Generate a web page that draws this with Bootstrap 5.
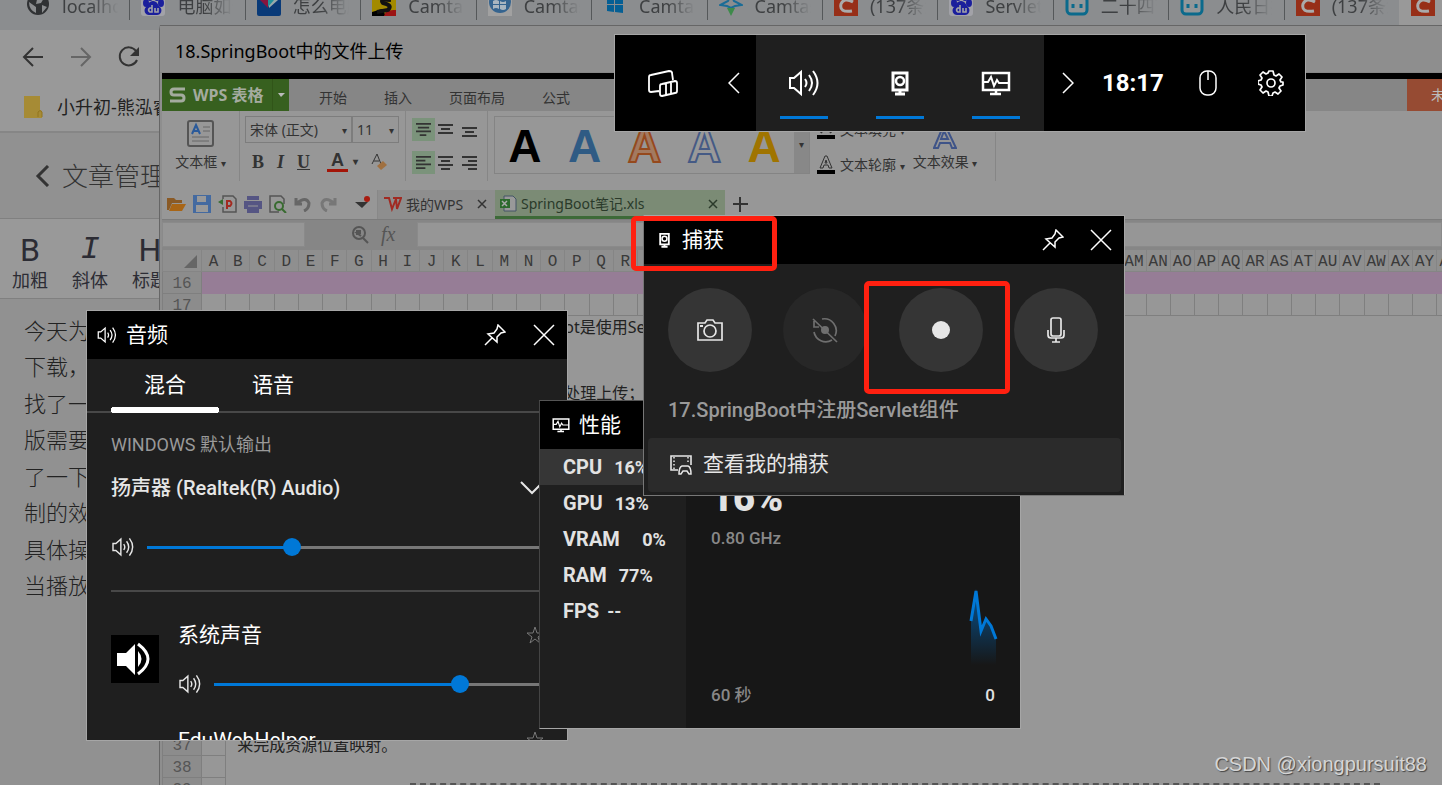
<!DOCTYPE html>
<html lang="zh-CN">
<head>
<meta charset="utf-8">
<meta name="viewport" content="width=device-width, initial-scale=1">
<title>Xbox Game Bar</title>
<link href="https://cdn.jsdelivr.net/npm/bootstrap@5.3.0/dist/css/bootstrap.min.css" rel="stylesheet">
<style>
:root{--ui:"Roboto","Noto Sans CJK SC",sans-serif;--doc:"Noto Sans","Noto Sans CJK SC",sans-serif;--accent:#0078d7}
html,body{height:100%}
body{font-family:var(--doc);background:#999;overflow:hidden}
button{font-family:inherit;background:none;border:0;padding:0;color:inherit}
svg{flex:none;display:block}
.ln{fill:none;stroke:currentColor}
.ln:not([stroke-width]){stroke-width:2}
.desk{min-height:100vh;height:100vh}
/* browser tabs */
.tabs{height:25px;padding-left:14px;background:#8b8d8f}
.tb{flex:1 1 0;min-width:0;padding-left:12px;color:#3e4042;text-decoration:none;font-size:18px}
.tb>span{display:flex;margin-top:-8px;height:28px;line-height:28px;gap:12px}
.tb b{font-weight:400;width:56px;overflow:hidden;white-space:nowrap;-webkit-mask-image:linear-gradient(90deg,#000 50%,transparent)}
.tb+.tb::before{content:"";position:absolute;left:0;top:0;height:20px;border-left:1px solid #55585a}
.tb.on{flex:0 0 43px;background:#999}
.tb.on::before{display:none}
/* left browser page */
.page{width:160px;background:#919191;border-top:5px solid #8b8d8f;border-right:1px solid #666;overflow:hidden;white-space:nowrap;color:#333}
.nav1{height:103px;background:#999;border-bottom:2px solid #868686;padding:14px 0 0 22px}
.nav1 .arrows{gap:26px;height:26px}
.fav{margin-top:23px;gap:14px;font-size:18px;line-height:28px;color:#222}
.crumb{height:86px;border-bottom:1px solid #808080;padding:2px 0 0 34px;font-size:26px;gap:11px;color:#333}
.tools{height:80px;background:#999;border-bottom:1px solid #808080;padding:9px 0 0 12px;gap:24px;color:#2c2c34}
.tools button{width:36px;font-size:18px;line-height:26px}
.tools b,.tools i{display:block;font:400 32px/34px "Roboto",sans-serif}
.tools i{font-family:"Liberation Mono",monospace;font-style:italic}
.art{height:292px;margin:13px 0 0 24px;font-size:22px;line-height:36px;color:#222}
.thin{font-weight:300}
.art p{flex:1 1 0;margin:0}
/* video window */
.win{background:#8e8e8e;border-top:1px solid #666;min-width:0;overflow:hidden}
.ttl{height:47px;border-bottom:1px solid #868686;padding-left:15px;font-size:18px;line-height:51px;color:#000}
.inner{border-top:6px solid #000;margin-left:2px;background:#979797;color:#333;white-space:nowrap}
.mbar{height:32px;background:#868686;font-size:14px}
.wps{width:127px;background:#37601f;color:#a4ab9f;font-size:16px;font-weight:700;padding-left:7px;gap:7px}
.wps em{width:17px;border-left:1px solid #315519;align-self:stretch}
.mlist{padding-left:30px;gap:37px;padding-top:6px}
.login{width:35px;background:#964b33;color:#bbb;padding-left:24px;overflow:hidden}
.rib{height:79px;font-size:14px}
.rib small{font-size:10px}
.rg{border-right:1px solid #868686;height:70px;padding-top:5px}
.bx{border:1px solid #7d7d7d;height:27px;line-height:26px}
.gal{width:316px;height:58px;border:1px solid #848484;font:700 46px/58px "Liberation Sans",sans-serif}
.gal span{flex:1 1 0;text-align:center}
.gal em{width:15px;background:#888;font:400 10px/56px "Liberation Sans",sans-serif;text-align:center}
.gr{background:#7b937b;width:23px;height:23px;margin-left:-4px;padding:3px 4px}
.alg{width:66px;row-gap:10px;column-gap:8px;grid-template-columns:14px 16px 16px}
.dt{height:29px;font-size:14px}
.ic7{padding:0 8px 0 5px;gap:7px;width:185px}
.t1{background:#8e8e8e;width:118px;padding:0 8px 0 6px;border-left:1px solid #888}
.t2{background:#7b8b75;width:230px;border-bottom:3px solid #3d6a38;padding:2px 7px 0 5px;color:#2a3a2a}
.fb{height:31px;background:#868686;border-top:1px solid #7c7c7c}
.fb input{background:#969696;border:1px solid #8a8a8a;height:25px;border-radius:0;padding:0}
.sheet{width:calc(100% + 20px);table-layout:fixed;border-collapse:collapse;font-size:16px;line-height:18px}
.sheet th,.sheet td{height:22px;padding:0;border:1px solid #7f7f7f;font-weight:400;overflow:hidden}
.sheet thead th{font-family:"Liberation Mono",monospace;background:#8f8f8f;text-align:center;border-color:#858585;border-top:0;color:#3a3a3a;padding-top:3px}
.sheet tbody th{background:#8c8c8c;text-align:center;color:#555;font-family:"Liberation Mono",monospace;padding-top:3px}
.sheet .rn{width:39px}
.sheet .pk{background:#967d96;border-color:#967d96}
.sheet .big{vertical-align:top;font-size:16px;line-height:22px;border:0;border-top:1px solid #7f7f7f;color:#222}
.big p{margin:0;height:22px}
.big .c1{padding-left:338px}
.big .c2{padding-left:11px}
.big .cut{margin:27px 0 0 184px;width:970px;border-top:2px dashed #555;height:3px}
/* game bar */
.gb{position:absolute;font-family:var(--ui);color:#fff;background:#1f1f1f;border:1px solid #a6a6a6;white-space:nowrap;overflow:hidden}
.bar{left:614px;top:34px;width:692px;height:98px}
.bar .blk{background:#000}
.bar .mid{width:288px}
.wb{position:relative;width:96px;height:96px}
.wb svg{margin:0 auto}
.wb::after{content:"";position:absolute;left:24px;right:24px;top:81px;height:3px;background:var(--accent)}
.clock{font:700 24px/32px "Roboto",sans-serif}
.hd{height:48px;background:#000;font-size:21px;gap:9px;padding:0 12px 0 10px;color:#fff}
.hd>span{padding-top:2px}
.hd .pin{margin-left:auto;margin-right:18px}
.aud{left:86px;top:310px;width:482px;height:431px}
.atabs{height:54px;border-bottom:2px solid #484848;padding-left:24px;font-size:21px}
.atabs button{width:108px;height:54px;padding-bottom:1px}
.atabs .on{background:radial-gradient(circle at 3px 3px,#fff 3px,transparent 3px) 0 100%/6px 6px no-repeat,radial-gradient(circle at 3px 3px,#fff 3px,transparent 3px) 100% 100%/6px 6px no-repeat,linear-gradient(#fff,#fff) 50% 100%/102px 6px no-repeat}
.abody{padding:0 23px 0 24px;color:#e6e6e6}
.cap{font-size:18px;line-height:24px;color:#999;margin-top:20px}
.dev{font-size:20px;font-weight:500;height:30px;margin-top:16px;width:100%}
.rowv{height:24px;gap:12px}
input[type=range].vol{appearance:none;-webkit-appearance:none;flex:1 1 0;min-width:0;height:18px;background:none;margin:0}
.vol::-webkit-slider-runnable-track{height:3px;background:linear-gradient(90deg,var(--accent) var(--v),#777 var(--v))}
.vol::-webkit-slider-thumb{-webkit-appearance:none;width:18px;height:18px;border-radius:50%;background:var(--accent);margin-top:-8px}
.sepr{border-top:2px solid #484848;margin:31px 0 29px}
.app{gap:19px}
.app .nm{font-size:21px;line-height:28px;color:#fff}
.perf{left:539px;top:400px;width:482px;height:329px;border-color:#555 #a6a6a6 #a6a6a6 #444;z-index:2}
.mt{width:146px;font-size:20px;color:#e2e2e2}
.mt button{height:36px;padding-left:23px;gap:12px;font-weight:700;width:100%}
.mt .on{background:#363636}
.mt b{min-width:34px;text-align:right;font-weight:700;font-size:18px}
.cpu{background:#171717;flex:1 1 0;padding:21px 25px 0 25px;color:#888;font-size:17px;font-weight:500}
.cpu strong{display:block;font-size:38px;line-height:56px;font-weight:900;color:#e2e2e2}
.capt{left:643px;top:215px;width:482px;height:281px;z-index:3;border-color:#a6a6a6 #a6a6a6 #777 #777}
.circ{padding:24px 26px 0 24px}
.circ button{width:84px;height:84px;border-radius:50%;background:#353535;color:#e6e6e6}
.circ button:disabled{background:#272727;color:#6f6f6f}
.circ svg{margin:auto}
.last{font-size:20px;font-weight:500;line-height:30px;padding-left:24px;margin:23px 0 13px;color:#9a9a9a}
.view{background:#2b2b2b;margin:0 3px 0 4px;height:54px;border-radius:4px;width:473px;padding-left:22px;gap:11px;font-size:21px;color:#e6e6e6}
.red{position:absolute;z-index:4;border:5px solid #ff2010;border-radius:5px;width:146px}
.r1{left:631px;top:216px;height:55px}
.r2{left:864px;top:281px;height:113px}
.wm{position:absolute;right:15px;bottom:7px;font:400 20px/28px "Liberation Sans",sans-serif;color:#d5d5d5;text-shadow:1px 1px 1px #444}
</style>
</head>
<body>
<svg width="0" height="0" class="position-absolute" aria-hidden="true">
<defs>
<symbol id="spk" viewBox="0 0 32 28"><path class="ln" d="M2 9h4l7-6v22l-7-6H2z"/><path class="ln" d="M17 10q3 4 0 8M21 6q6 8 0 16M25 2q9 12 0 24"/></symbol>
<symbol id="cam" viewBox="0 0 20 26"><path class="ln" stroke-width="3" d="M3 3h14v17H3zM10 20v4M5 24h10"/><circle class="ln" cx="10" cy="11" r="4" stroke-width="2.5"/></symbol>
<symbol id="mon" viewBox="0 0 30 26"><path class="ln" stroke-width="2.5" d="M2 3h26v17H2zM15 20v4M9 24h11"/><path class="ln" d="M2 12h5l3-5 3 9 3-6 2 3h10"/></symbol>
<symbol id="pin" viewBox="0 0 22 22"><path class="ln" stroke-width="1.5" d="M14 1l7 7-4 1-4 4 0 5-9-8 6-1 3-4zM8 14l-7 7"/></symbol>
<symbol id="x" viewBox="0 0 22 22"><path class="ln" stroke-width="1.5" d="M1 1l20 20M21 1L1 21"/></symbol>
<symbol id="star" viewBox="0 0 18 18"><path fill="none" stroke="currentColor" d="M9 1l2 6h6l-5 4 2 6-5-4-5 4 2-6-5-4h6z"/></symbol>
<symbol id="du" viewBox="0 0 24 24"><rect width="24" height="24" rx="3" fill="#a2a2a8"/><g fill="#1b1f9c"><ellipse cx="5" cy="11" rx="3" ry="4"/><ellipse cx="9" cy="5" rx="3" ry="4"/><ellipse cx="16" cy="5" rx="3" ry="4"/><ellipse cx="20" cy="11" rx="3" ry="4"/><path d="M12 9c4 0 5 4 7 6 3 3 1 8-3 8H8c-4 0-6-5-3-8 2-2 3-6 7-6z"/></g><path stroke="#a2a2a8" stroke-width="1.6" fill="none" d="M11 13v7H9q-3-2 0-4h2M14 16v4h3v-4"/></symbol>
<symbol id="cs" viewBox="0 0 24 24"><path fill="#972f18" d="M0 0h24v24H0z"/><path d="M19 10q-9-5-12 2-2 9 11 7" fill="none" stroke="#aaa" stroke-width="3"/></symbol>
<symbol id="bili" viewBox="0 0 24 24"><rect x="2" y="5" width="20" height="17" rx="4" fill="#939799" stroke="#0b6a8c" stroke-width="3"/><path stroke="#0b6a8c" stroke-width="3" d="M8 12v4M16 12v4"/></symbol>
</defs></svg>

<div class="desk position-relative overflow-hidden d-flex flex-column">
<nav class="tabs d-flex" aria-label="标签页">
<a href="#" class="tb position-relative"><span><svg width="24" height="24" viewBox="0 0 24 24"><circle cx="12" cy="12" r="11" fill="#303234"/><path fill="#8b8d8f" d="M3 10l7 5v6q-7-3-7-11zM12 3l6 3-3 5-5 1zM16 13l5 2-5 6z"/></svg><b>localhost</b></span></a>
<a href="#" class="tb position-relative"><span><svg width="24" height="24"><use href="#du"/></svg><b>电脑如何</b></span></a>
<a href="#" class="tb position-relative"><span><svg width="24" height="24" viewBox="0 0 24 24"><rect width="24" height="24" rx="2" fill="#093a78"/><path fill="#86143e" d="M3 8h9l-1 8z"/><path fill="#9aa" d="M12 8h9l-9 8z"/><path fill="#23919b" d="M11 8h6l-6 7z"/></svg><b>怎么电脑</b></span></a>
<a href="#" class="tb position-relative"><span><svg width="24" height="24" viewBox="0 0 24 24"><path fill="#a38a00" d="M0 0h24v24H0z"/><path d="M0 24v-4l10-3 4 7z"/><path d="M12 24q1-7 12-6v6z" fill="#9c1414"/><path d="M19 8q-12-1-8 3 10 2 5 7l-11 2" fill="none" stroke="#111" stroke-width="4"/></svg><b>Camtasia</b></span></a>
<a href="#" class="tb position-relative"><span><svg width="24" height="24" viewBox="0 0 24 24"><path fill="#a1a1a1" d="M0 0h24v24H0z"/><circle cx="12" cy="10" r="11" fill="#35648f"/><path fill="#a9b6c0" d="M5 9q3-2 6 0v3H5zM12 9q3 2 6 0v3h-6zM5 13h6v4q-3-2-6 0zM12 13h6v4q-3 2-6 0z"/></svg><b>Camtasia</b></span></a>
<a href="#" class="tb position-relative"><span><svg width="24" height="24" viewBox="0 0 24 24"><path fill="#055f94" d="M4 6l7-1v7H4zM12 5l8-1v8h-8zM4 13h7v7l-7-1zM12 13h8v8l-8-1z"/></svg><b>Camtasia</b></span></a>
<a href="#" class="tb position-relative"><span><svg width="24" height="24" viewBox="0 0 24 24"><path fill="none" stroke="#1a6c96" stroke-width="2" d="M12 2l3 7 8 4-7 1-4 2-4-2-7-1 8-4z"/><path fill="#3d8a4a" d="M8 16h8l-4 8z"/></svg><b>Camtasia</b></span></a>
<a href="#" class="tb position-relative"><span><svg width="24" height="24"><use href="#cs"/></svg><b>(137条消息</b></span></a>
<a href="#" class="tb position-relative"><span><svg width="24" height="24"><use href="#du"/></svg><b>Servlet_</b></span></a>
<a href="#" class="tb position-relative"><span><svg width="24" height="24"><use href="#bili"/></svg><b>二十四节</b></span></a>
<a href="#" class="tb position-relative"><span><svg width="24" height="24"><use href="#bili"/></svg><b>人民日报</b></span></a>
<a href="#" class="tb position-relative"><span><svg width="24" height="24"><use href="#cs"/></svg><b>(137条消息</b></span></a>
<a href="#" class="tb on position-relative" aria-label="CSDN"><span><svg width="24" height="24"><use href="#cs"/></svg></span></a>
</nav>
<div class="d-flex flex-grow-1 overflow-hidden">
<aside class="page flex-shrink-0">
<div class="nav1">
<div class="arrows d-flex align-items-center">
<button aria-label="后退"><svg width="22" height="22" viewBox="0 0 22 22"><path class="ln" d="M21 11H3M11 2l-9 9 9 9"/></svg></button>
<button aria-label="前进"><svg width="22" height="22" viewBox="0 0 22 22" color="#666"><path class="ln" d="M1 11h18M11 2l9 9-9 9"/></svg></button>
<button aria-label="刷新"><svg width="22" height="22" viewBox="0 0 22 22"><path class="ln" d="M18 5a9 9 0 1 0 1 9"/><path fill="#333" d="M21 1v9h-9z"/></svg></button>
</div>
<a href="#" class="fav d-flex align-items-center text-decoration-none"><svg width="21" height="22" viewBox="0 0 21 22"><path fill="#a68b35" d="M2 0h16v14l2 1v7H2z"/><path fill="none" stroke="#92751e" d="M16 21v-5q2-3 4 0v5"/></svg>小升初-熊泓睿</a>
</div>
<div class="crumb thin d-flex align-items-center"><svg width="17" height="22" viewBox="0 0 17 22"><path class="ln" stroke-width="3" d="M14 1L4 11l10 10"/></svg>文章管理</div>
<div class="tools d-flex"><button><b>B</b>加粗</button><button><i>I</i>斜体</button><button><b>H</b>标题</button></div>
<div class="art thin d-flex flex-column"><p>今天为了</p><p>下载，</p><p>找了一个</p><p>版需要</p><p>了一下</p><p>制的效果</p><p>具体操作</p><p>当播放</p></div>
</aside>

<main class="win flex-grow-1">
<div class="ttl">18.SpringBoot中的文件上传</div>
<div class="inner">
<div class="mbar d-flex">
<button class="wps d-flex align-items-center"><svg width="17" height="16" viewBox="0 0 17 16"><path d="M16 2H5Q2 2 2 5t3 3h7q3 0 3 3t-3 3H1" fill="none" stroke="#a4ab9f" stroke-width="3"/></svg>WPS 表格<em class="d-flex align-items-center ms-auto"><svg class="mx-auto" width="7" height="4"><path fill="#bbb" d="M0 0h7L3 4z"/></svg></em></button>
<div class="mlist d-flex align-items-center"><span>开始</span><span>插入</span><span>页面布局</span><span>公式</span></div>
<div class="login ms-auto d-flex align-items-center">未登录</div>
</div>
<div class="rib d-flex">
<div class="rg text-center" style="width:78px"><svg class="mx-auto mt-1 mb-1" width="27" height="27" viewBox="0 0 27 27"><rect x="1" y="1" width="25" height="25" rx="2" fill="none" stroke="#555" stroke-width="2"/><path fill="none" stroke="#666" d="M16 7h7M16 11h7M5 17h17M5 21h17"/><path fill="none" stroke="#2a5a9a" stroke-width="2" d="M5 14l4-9 4 9M7 11h5"/></svg>文本框 <small>▾</small></div>
<div class="rg" style="width:166px;padding-left:5px">
<div class="d-flex"><div class="bx ps-1" style="width:107px">宋体 (正文)<small class="float-end pe-1">▾</small></div><div class="bx ps-1" style="width:47px">11<small class="float-end pe-1">▾</small></div></div>
<div class="d-flex align-items-center pt-2" style="gap:13px;padding-left:7px;font:700 18px/22px 'Liberation Serif',serif"><span>B</span><i>I</i><u>U</u><span style="border-bottom:3px solid #a31508;line-height:18px;font-family:'Liberation Sans'" class="px-1 ms-1">A</span><small style="margin-left:-8px">▾</small><svg width="17" height="18" viewBox="0 0 17 18"><path class="ln" stroke-width="1" d="M1 11l5-10 4 10M3 8h5"/><path fill="#a07040" d="M6 13l6-5 4 4-6 5z"/></svg></div>
</div>
<div class="rg" style="width:82px;padding:7px 0 0 10px"><div class="alg d-grid">
<svg class="gr" viewBox="0 0 16 16"><path class="ln" d="M0 2h16M2 6h12M0 10h16M4 14h7"/></svg><svg width="16" height="18"><path class="ln" d="M0 7h15M3 11h9M0 15h15"/></svg><svg width="16" height="20"><path class="ln" d="M0 10h15M3 14h9M0 18h15"/></svg>
<svg class="gr" viewBox="0 0 16 16"><path class="ln" d="M0 2h16M0 6h10M0 10h16M0 14h10"/></svg><svg width="16" height="20"><path class="ln" d="M0 6h15M3 10h9M0 14h15M3 18h9"/></svg><svg width="16" height="20"><path class="ln" d="M0 6h15M6 10h9M0 14h15M6 18h9"/></svg></div></div>
<div class="rg d-flex" style="width:508px;padding-left:6px">
<div class="gal d-flex"><span style="color:#000">A</span><span style="color:#2f5b84">A</span><span style="color:#a37a60;-webkit-text-stroke:2px #95491d">A</span><span style="color:#999;-webkit-text-stroke:2px #455a85">A</span><span style="color:#a07400">A</span><em>▾</em></div>
<div class="d-flex flex-column" style="padding:4px 0 0 7px;gap:14px;line-height:19px"><div class="d-flex" style="gap:5px"><svg width="18" height="20"><path class="ln" d="M4 13l5-11 5 11"/><path fill="#000" d="M0 15h18v4H0z"/></svg><span>文本填充 <small>▾</small></span></div><div class="d-flex" style="gap:5px"><svg width="18" height="20"><path class="ln" stroke-width="1" d="M3 13L8 1h2l5 12h-3l-1-3H7l-1 3zM8 8l1-3 1 3z"/><path fill="#000" d="M0 15h18v4H0z"/></svg><span>文本轮廓 <small>▾</small></span></div></div>
<div class="text-center" style="padding:9px 0 0 8px;line-height:19px"><svg class="mx-auto" width="24" height="27" viewBox="0 0 24 27"><path fill="none" stroke="#3f5488" stroke-width="2" d="M1 23L9 4h5l9 19h-4l-2-5H7l-2 5zM8 14l3-8 4 8z"/></svg>文本效果 <small>▾</small></div>
</div>
</div>
<div class="dt d-flex align-items-stretch">
<div class="ic7 d-flex align-items-center flex-shrink-0">
<svg width="19" height="16" viewBox="0 0 19 16"><path fill="#8a5a26" d="M0 2h7l2 2h6v3H5l-3 7H0z"/><path fill="#a86516" d="M5 8h14l-4 7H2z"/></svg>
<svg width="18" height="18" viewBox="0 0 18 18"><path fill="#446aa0" d="M0 0h18v18H0z"/><path fill="#999" d="M4 1h9v6H4zM3 10h12v7H3z"/></svg>
<svg width="19" height="18" viewBox="0 0 19 18"><path fill="none" stroke="#555" stroke-width="1.5" d="M5 4V1h10l3 3v13H5v-5"/><path fill="#386b30" d="M0 7l5-3v6z"/><path fill="none" stroke="#a32a20" stroke-width="2" d="M9 14V6h3q3 2 0 5H9"/></svg>
<svg width="18" height="17" viewBox="0 0 18 17"><path fill="#555583" d="M3 0h12v4H3zM0 5h18v8H0zM3 12h12v5H3z"/><path stroke="#999" d="M4 10h10"/></svg>
<svg width="18" height="18" viewBox="0 0 18 18"><path fill="none" stroke="#555" stroke-width="1.5" d="M15 9V4l-3-3H1v16h9"/><circle cx="10" cy="11" r="4" fill="none" stroke="#386b30" stroke-width="2"/><path stroke="#386b30" stroke-width="2" d="M13 14l4 4"/></svg>
<svg width="18" height="16" viewBox="0 0 18 16"><path fill="none" stroke="#666" stroke-width="3" d="M3 7q9-7 12 0 0 6-5 8M2 2v6h6"/></svg>
<svg width="18" height="16" viewBox="0 0 18 16"><path fill="none" stroke="#777" stroke-width="3" d="M15 7Q6 0 3 7q0 6 5 8M16 2v6h-6"/></svg>
</div>
<div class="d-flex align-items-center flex-shrink-0" style="width:30px;padding-left:8px"><svg width="16" height="16" viewBox="0 0 16 16"><path fill="#333" d="M0 6h13l-6 6z"/><circle cx="12" cy="3" r="3" fill="#a81c10"/></svg></div>
<div class="t1 d-flex align-items-center gap-1"><svg width="18" height="15" viewBox="0 0 18 15"><path fill="none" stroke="#a12a22" stroke-width="2" d="M0 1h5l3 11 4-10 1 10L17 1H9"/></svg>我的WPS<svg class="ms-auto" width="10" height="10"><path class="ln" stroke-width="1.5" d="M1 1l8 8M9 1L1 9"/></svg></div>
<div class="t2 d-flex align-items-center gap-1"><svg width="17" height="17" viewBox="0 0 17 17"><path fill="#999" stroke="#456" d="M4 1h9l3 3v12H4z"/><path fill="#2c6a2c" d="M0 4h10v9H0z"/><path stroke="#aaa" stroke-width="1.5" d="M2 6l5 5M7 6l-5 5"/></svg>SpringBoot笔记.xls<svg class="ms-auto" width="10" height="10"><path class="ln" stroke-width="1.5" d="M1 1l8 8M9 1L1 9"/></svg></div>
<div class="d-flex align-items-center ps-2"><svg width="15" height="15"><path class="ln" d="M7 0v15M0 7h15"/></svg></div>
</div>
<div class="fb d-flex align-items-center">
<input aria-label="名称框" style="width:143px"><svg style="margin-left:47px" width="17" height="18" viewBox="0 0 17 18" color="#555"><circle class="ln" cx="7" cy="7" r="6"/><path class="ln" d="M11 12l5 5M5 9V5h3v2H5l4 3" /></svg><i style="font:italic 20px 'Liberation Serif';margin:0 22px 0 12px;color:#555">fx</i><input class="flex-grow-1" aria-label="编辑栏">
</div>
<table class="sheet" id="sheet"><thead><tr><th class="rn"><svg class="ms-auto me-1" width="13" height="13"><path fill="#666" d="M13 0v13H0z"/></svg></th></tr></thead><tbody></tbody></table>
</div>
</main>
</div>

<section class="gb bar d-flex" aria-label="游戏栏">
<div class="blk d-flex align-items-center" style="width:141px;padding-left:32px"><button aria-label="小组件"><svg width="32" height="28" viewBox="0 0 32 28"><path class="ln" stroke-width="1.8" stroke-linejoin="round" d="M12 22l-8 1q-2 0-2-2V8q0-2 2-2l18-4q3 0 3 2l1 7M15 15l13-3q2 0 2 2v8q0 2-2 2l-13 3q-2 0-2-2v-8q0-2 2-2zM19 14v12M24 13v12"/></svg></button><button class="ms-auto me-3" aria-label="向左"><svg width="12" height="22" viewBox="0 0 12 22"><path class="ln" stroke-width="1.5" d="M11 1L1 11l10 10"/></svg></button></div>
<div class="mid d-flex"><button class="wb" aria-label="音频"><svg width="32" height="28"><use href="#spk"/></svg></button><button class="wb" aria-label="捕获"><svg width="20" height="26"><use href="#cam"/></svg></button><button class="wb" aria-label="性能"><svg width="30" height="26"><use href="#mon"/></svg></button></div>
<div class="blk d-flex align-items-center flex-grow-1" style="padding:0 21px 0 18px"><button aria-label="向右"><svg width="12" height="22" viewBox="0 0 12 22"><path class="ln" stroke-width="1.5" d="M1 1l10 10L1 21"/></svg></button><span class="clock" style="margin-left:28px">18:17</span><button class="ms-auto" aria-label="鼠标"><svg width="18" height="26" viewBox="0 0 18 26"><rect class="ln" stroke-width="1.5" x="1" y="1" width="16" height="24" rx="7"/><path class="ln" stroke-width="1.5" d="M9 1v9"/></svg></button><button style="margin-left:41px" aria-label="设置"><svg width="26" height="26" viewBox="0 0 26 26"><circle class="ln" stroke-width="1.7" cx="13" cy="13" r="4"/><path class="ln" stroke-width="1.7" stroke-linejoin="round" d="M11 1h4l1 4 2 1 3-2 3 3-2 3 1 2 2 0v3l-3 1-1 2 2 3-3 3-3-2-2 1-1 3h-3l-1-4-2-1-3 2-3-3 2-3-1-2-3-1v-3l3-1 1-2-2-3 3-3 3 2 2-1z"/></svg></button></div>
</section>

<section class="gb aud" aria-label="音频">
<div class="hd d-flex align-items-center"><svg width="20" height="18"><use href="#spk"/></svg><span>音频</span><button class="pin" aria-label="固定"><svg width="22" height="22"><use href="#pin"/></svg></button><button aria-label="关闭"><svg width="22" height="22"><use href="#x"/></svg></button></div>
<div class="atabs d-flex"><button class="on">混合</button><button>语音</button></div>
<div class="abody">
<div class="cap">WINDOWS 默认输出</div>
<button class="dev d-flex align-items-center justify-content-between"><span>扬声器 (Realtek(R) Audio)</span><svg width="24" height="14" viewBox="0 0 24 14"><path class="ln" d="M1 1l11 11L23 1"/></svg></button>
<div class="rowv d-flex align-items-center" style="margin-top:32px"><svg width="24" height="20"><use href="#spk"/></svg><input class="vol" type="range" aria-label="主音量" value="36" style="--v:37%"></div>
<div class="sepr"></div>
<div class="app d-flex align-items-center"><svg width="48" height="48" viewBox="0 0 48 48"><path d="M0 0h48v48H0z"/><path fill="#fff" d="M6 18h9l9-9v31l-9-9H6zM27 16q7 8 0 16z"/><path fill="none" stroke="#fff" stroke-width="3" d="M27 9q20 15 0 30"/></svg>
<div class="flex-grow-1"><div class="nm d-flex align-items-center justify-content-between">系统声音<svg width="18" height="18" color="#777"><use href="#star"/></svg></div>
<div class="rowv d-flex align-items-center" style="margin-top:23px"><svg width="24" height="20"><use href="#spk"/></svg><input class="vol" type="range" aria-label="系统声音音量" value="76" style="--v:75%"></div></div></div>
<div class="app d-flex" style="padding:30px 0 0 67px"><div class="nm flex-grow-1 d-flex align-items-center justify-content-between">EduWebHelper<svg width="18" height="18" color="#777"><use href="#star"/></svg></div></div>
</div>
</section>

<section class="gb perf" aria-label="性能">
<div class="hd d-flex align-items-center" style="padding-left:12px"><svg width="18" height="16"><use href="#mon"/></svg><span>性能</span></div>
<div class="d-flex" style="height:279px"><div class="mt">
<button class="on d-flex align-items-center">CPU<b>16%</b></button><button class="d-flex align-items-center">GPU<b>13%</b></button><button class="d-flex align-items-center">VRAM<b>0%</b></button><button class="d-flex align-items-center">RAM<b>77%</b></button><button class="d-flex align-items-center" style="gap:8px">FPS<b class="text-start">--</b></button></div>
<div class="cpu"><strong>16%</strong>0.80 GHz
<svg class="ms-auto" style="margin-top:33px;margin-right:-4px" width="30" height="80" viewBox="0 0 30 80"><defs><linearGradient id="g" x2="0" y2="1"><stop offset="0" stop-color="#0063b1" stop-opacity=".8"/><stop offset="1" stop-color="#0063b1" stop-opacity="0"/></linearGradient></defs><path fill="url(#g)" d="M2 36L7 4l5 44 5-13 5 6 5 12v27H2z"/><path fill="none" stroke="#0078d7" stroke-width="3" d="M2 36L7 6l5 40 5-12 5 7 5 13"/></svg>
<div class="d-flex justify-content-between" style="margin-top:18px"><span>60 秒</span><span style="color:#e2e2e2">0</span></div></div></div>
</section>

<section class="gb capt" aria-label="捕获">
<div class="hd d-flex align-items-center" style="padding-left:14px;gap:11px"><svg width="13" height="16"><use href="#cam"/></svg><span>捕获</span><button class="pin" style="margin-right:15px" aria-label="固定"><svg width="22" height="22"><use href="#pin"/></svg></button><button aria-label="关闭"><svg width="22" height="22"><use href="#x"/></svg></button></div>
<div class="circ d-flex justify-content-between">
<button aria-label="截图"><svg width="26" height="22" viewBox="0 0 26 22"><path class="ln" stroke-width="1.7" d="M1 4h7l2-3h6l2 3h7v17H1z"/><circle class="ln" stroke-width="1.7" cx="13" cy="12" r="6"/><path fill="currentColor" d="M3 6h3v2H3z"/></svg></button>
<button disabled aria-label="录制最近 30 秒"><svg width="26" height="26" viewBox="0 0 26 26"><path class="ln" stroke-width="1.7" d="M10 2a12 12 0 0 1 13 17M20 23A12 12 0 0 1 2 15M1 2l24 23M2 4v6h5"/><circle cx="13" cy="13" r="4" fill="currentColor"/></svg></button>
<button aria-label="开始录制"><svg width="18" height="18"><circle cx="9" cy="9" r="9" fill="currentColor"/></svg></button>
<button aria-label="麦克风"><svg width="18" height="26" viewBox="0 0 18 26"><rect class="ln" stroke-width="1.7" x="4" y="1" width="10" height="18" rx="2"/><path class="ln" stroke-width="1.7" d="M1 13v5q0 3 3 3h10q3 0 3-3v-5M9 21v4M5 25h8"/></svg></button>
</div>
<div class="last">17.SpringBoot中注册Servlet组件</div>
<button class="view d-flex align-items-center"><svg width="22" height="20" viewBox="0 0 22 20"><path class="ln" stroke-width="1.6" d="M8 15H1V1h20v9"/><path stroke="currentColor" stroke-width="1.5" stroke-dasharray="1.5 2" d="M4 2v12M18 2v7"/><path class="ln" stroke-width="1.5" d="M9 19q0-7 3-8h6q3 1 3 8l-2 0-2-3h-4l-2 3z"/></svg>查看我的捕获</button>
</section>
<div class="red r1"></div><div class="red r2"></div>
<div class="wm">CSDN @xiongpursuit88</div>
</div>
<script src="https://cdn.jsdelivr.net/npm/bootstrap@5.3.0/dist/js/bootstrap.bundle.min.js"></script>
<script>
// Build the spreadsheet: columns A..AZ, rows 16..39
const head=document.querySelector('#sheet thead tr'),body=document.querySelector('#sheet tbody');
const N=52;
for(let i=0;i<N;i++)head.insertAdjacentHTML('beforeend',`<th>${i<26?'':'A'}${String.fromCharCode(65+i%26)}</th>`);
for(let r=16;r<40;r++){
  let h=`<th>${r}</th>`;
  if(r===16)h+=`<td class="pk" colspan="${N}"></td>`;
  else if(r===17)h+='<td></td>'.repeat(N);
  else{h+='<td></td>';
    if(r===18)h+=`<td class="big" colspan="${N-1}" rowspan="22"><p class="c1">ot是使用Se</p><p></p><p></p><p class="c1">处理上传；</p>${'<p></p>'.repeat(15)}<p class="c2">来完成资源位置映射。</p><div class="cut"></div></td>`;}
  body.insertAdjacentHTML('beforeend',`<tr>${h}</tr>`);
}
</script>
</body>
</html>
